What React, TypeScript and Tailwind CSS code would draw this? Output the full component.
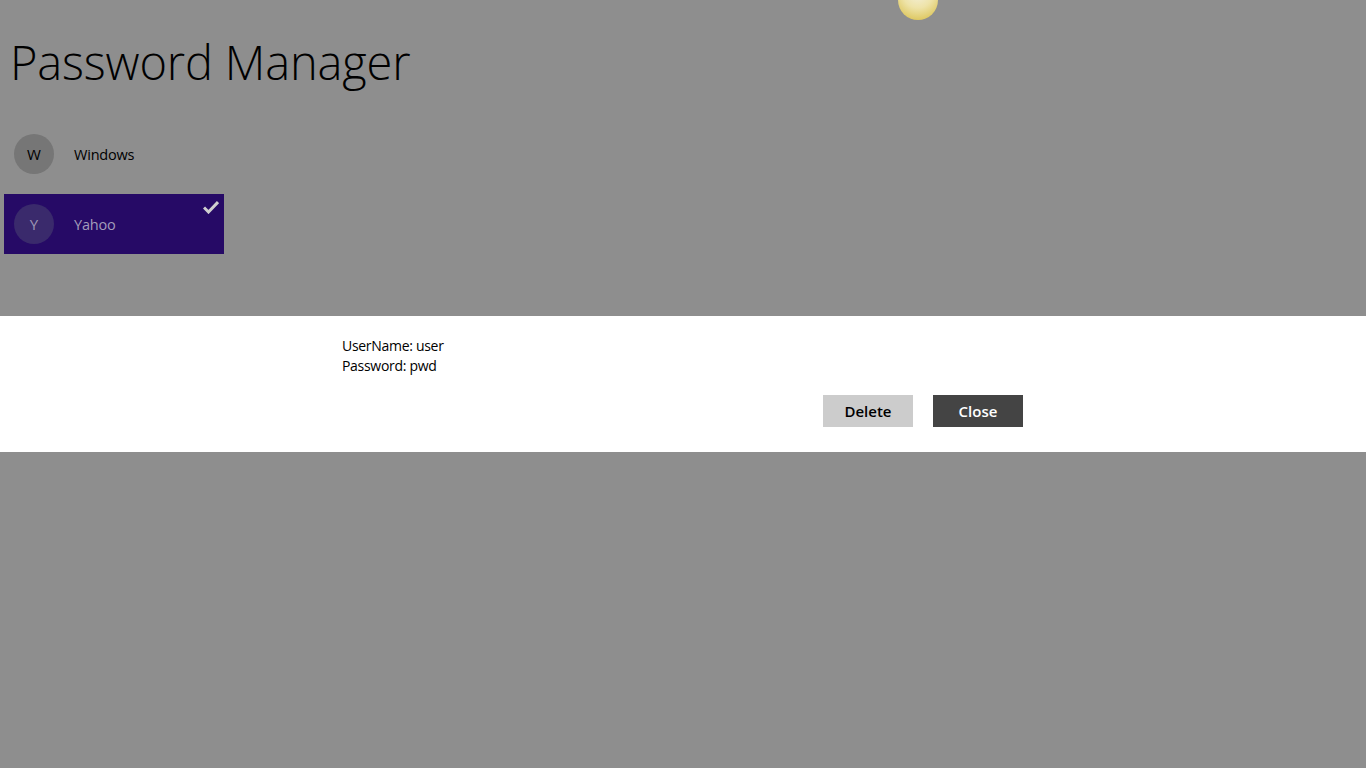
import React from "react";

export default function App() {
  return (
    <div
      className="relative w-[1366px] h-[768px] bg-[#8e8e8e] overflow-hidden"
      style={{ fontFamily: '"Open Sans", "Noto Sans", sans-serif' }}
    >
      <div
        className="absolute left-[898px] top-[-22px] w-[40px] h-[42px] rounded-full"
        style={{
          background:
            "radial-gradient(circle at 50% 35%, #f4f0dc 0%, #eee3a8 45%, #dcc55a 85%, #c9b040 100%)",
        }}
      />
      <div className="pt-[32px] pl-[10px]">
        <h1 className="text-[47px] font-light leading-[60px] text-black tracking-[-0.15px]">
          Password Manager
        </h1>
      </div>
      <div className="mt-[32px] pl-[4px] flex flex-col gap-[10px]">
        <div className="w-[220px] h-[60px] flex items-center pl-[10px]">
          <div className="w-[40px] h-[40px] rounded-full bg-[#767676] flex items-center justify-center text-[15px] text-black">
            W
          </div>
          <span className="ml-[20px] pt-[2px] text-[14.5px] text-black tracking-[-0.2px]">Windows</span>
        </div>
        <div className="relative w-[220px] h-[60px] flex items-center pl-[10px] bg-[#260a66]">
          <div className="w-[40px] h-[40px] rounded-full bg-[#3a2a6c] flex items-center justify-center text-[15px] text-[#9d96b4]">
            Y
          </div>
          <span className="ml-[20px] pt-[2px] text-[14.5px] text-[#a39cba] tracking-[-0.2px]">Yahoo</span>
          <svg
            className="absolute right-[5px] top-[6px]"
            width="16"
            height="14"
            viewBox="0 0 16 14"
          >
            <path d="M1 7.5 L5.5 12 L15 2" stroke="#cfcfcf" strokeWidth="3" fill="none" />
          </svg>
        </div>
      </div>
      <div className="absolute left-0 top-[316px] w-[1366px] h-[136px] bg-white">
        <div className="pl-[342px] pt-[20px] text-[14px] leading-[20px] text-black tracking-[-0.3px]">
          <div>UserName: user</div>
          <div>Password: pwd</div>
        </div>
        <div className="absolute left-[823px] top-[79px] flex gap-[20px]">
          <button className="w-[90px] h-[32px] bg-[#cccccc] text-black text-[15px] font-semibold">
            Delete
          </button>
          <button className="w-[90px] h-[32px] bg-[#444444] text-white text-[15px] font-semibold">
            Close
          </button>
        </div>
      </div>
    </div>
  );
}
